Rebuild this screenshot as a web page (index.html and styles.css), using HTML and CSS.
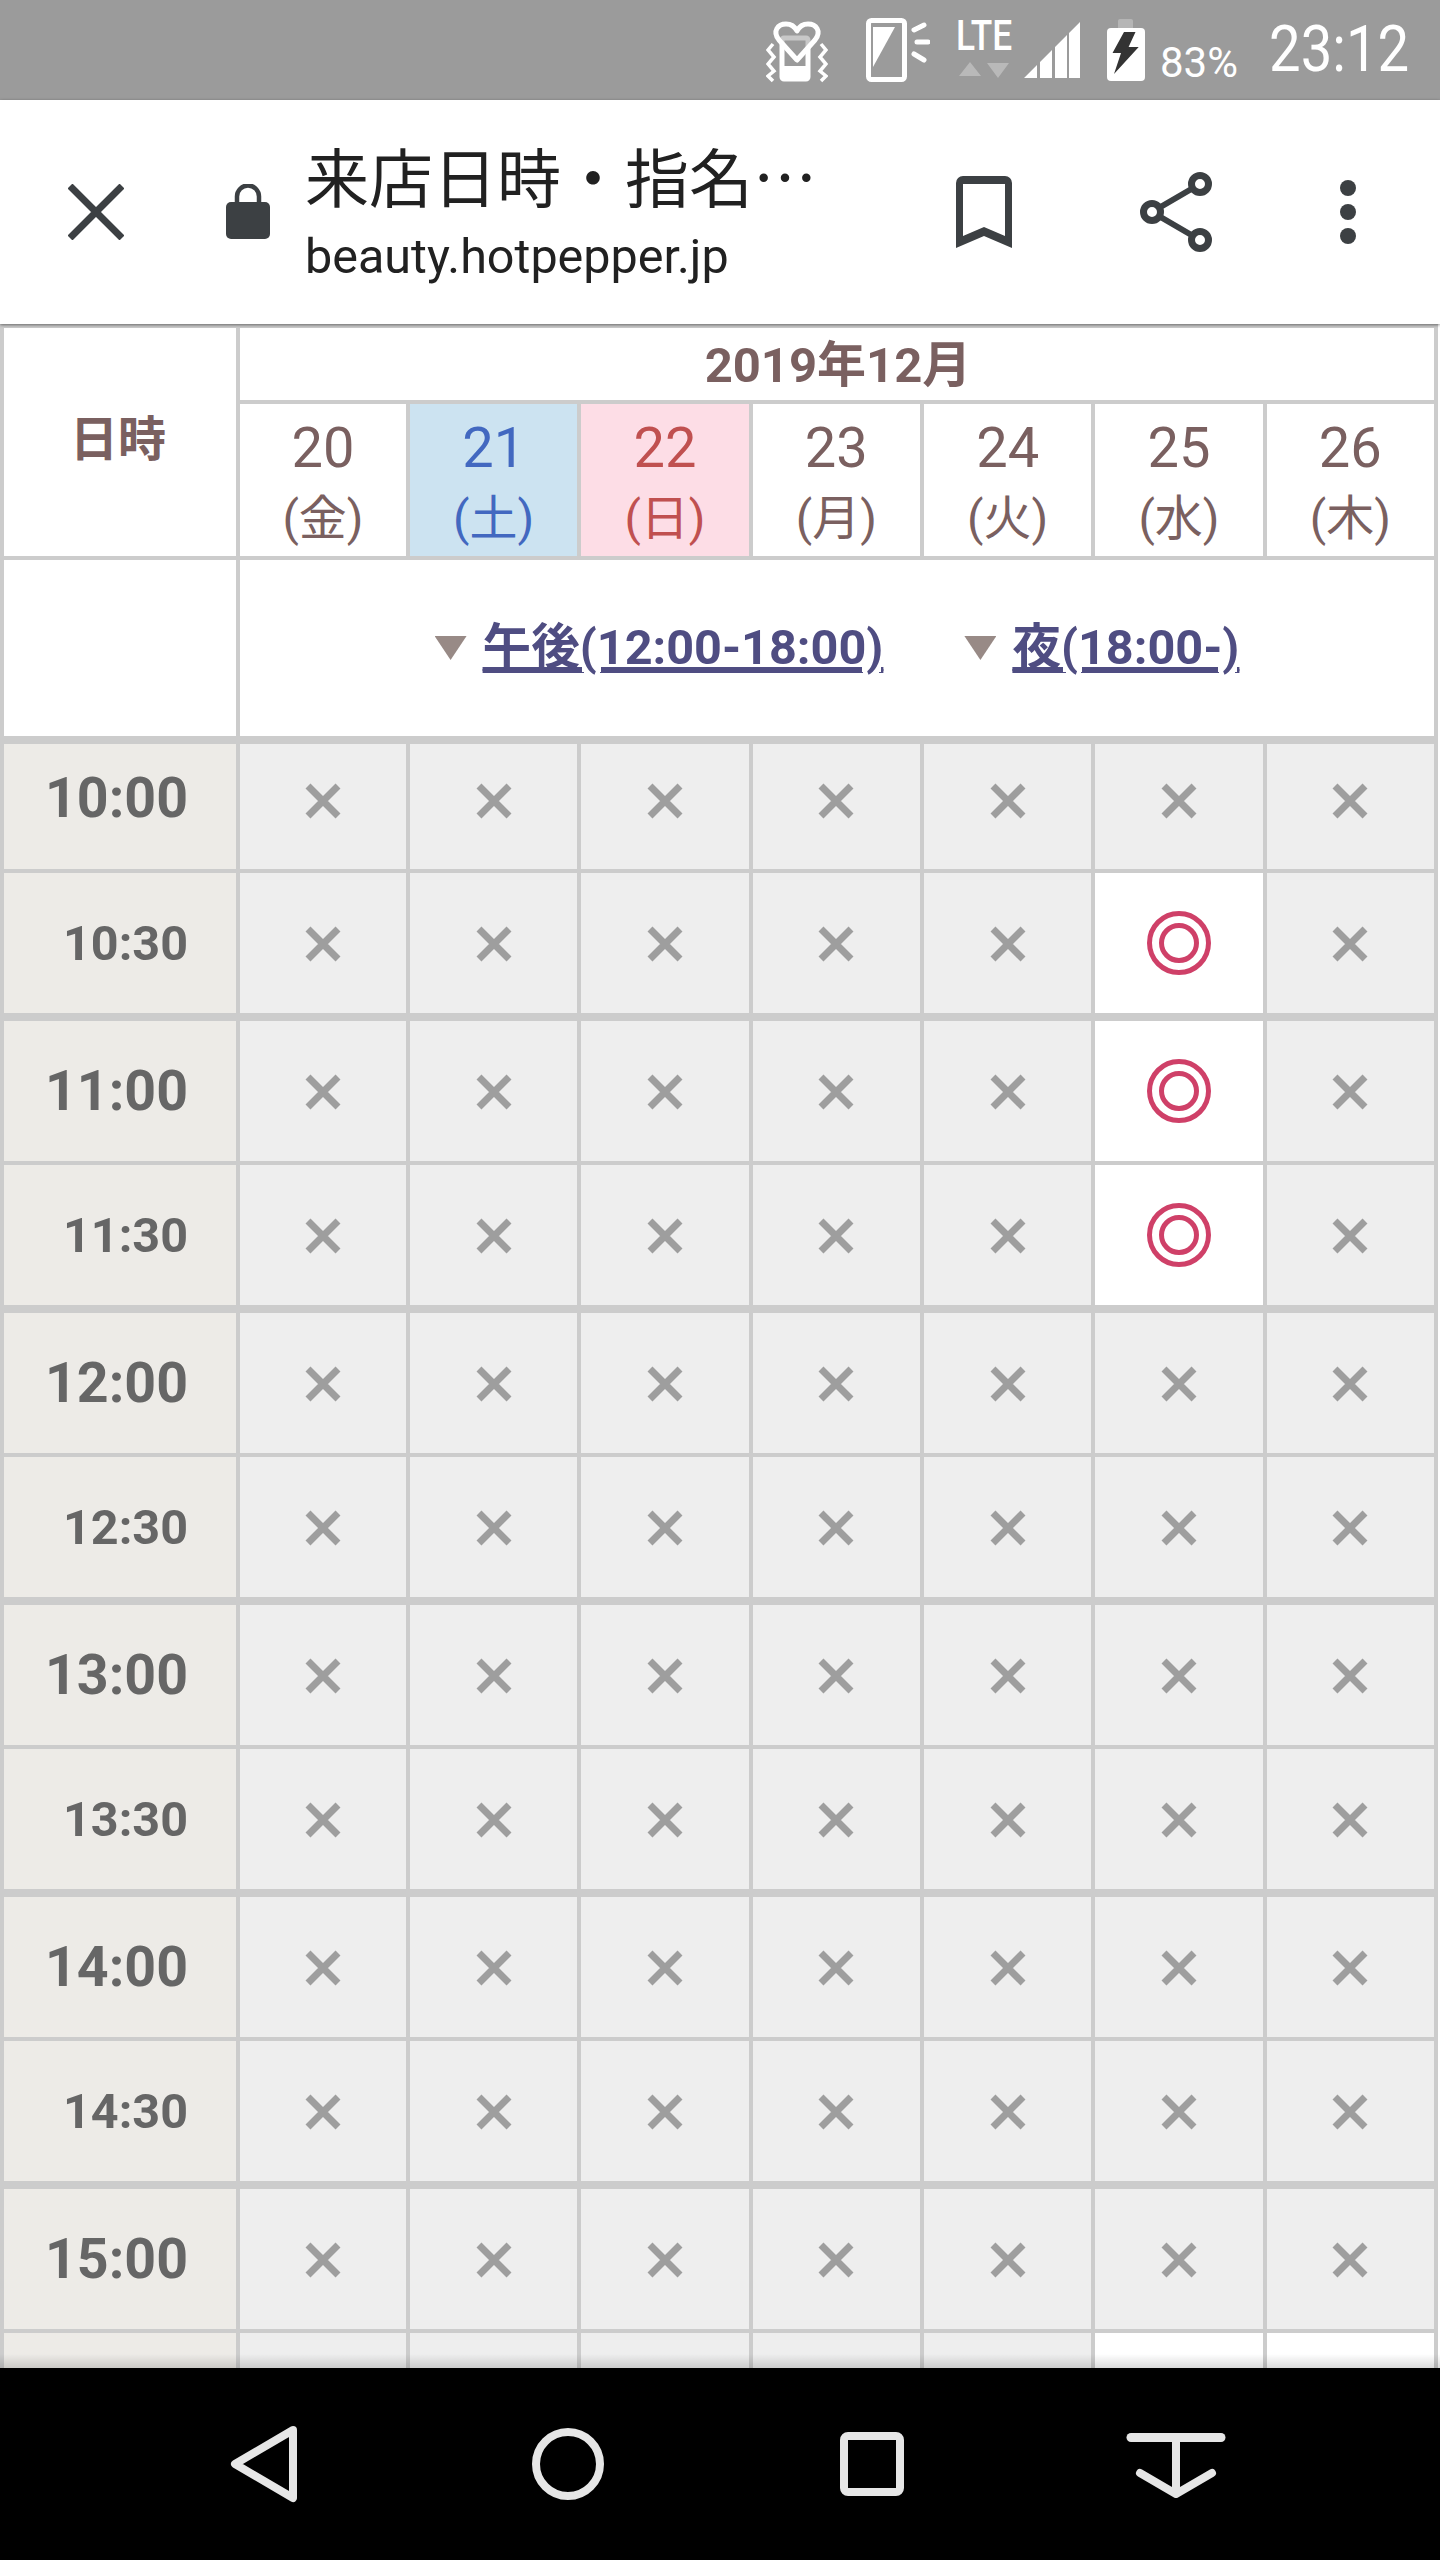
FILE: index.html
```html
<!DOCTYPE html>
<html lang="ja">
<head>
    <meta charset="UTF-8">
    <meta name="viewport" content="width=device-width, initial-scale=1.0">
    <title>来店日時・指名</title>
    <link rel="stylesheet" href="styles.css">
</head>
<body>
    <svg class="defs" width="0" height="0">
        <symbol id="mark-x" viewBox="0 0 36 36">
            <path d="M3 3L33 33M33 3L3 33" stroke="#9e9e9e" stroke-width="7" fill="none"/>
        </symbol>
        <symbol id="mark-o" viewBox="0 0 64 64">
            <circle cx="32" cy="32" r="29.5" stroke="#cf4068" stroke-width="5" fill="none"/>
            <circle cx="32" cy="32" r="17.5" stroke="#cf4068" stroke-width="5" fill="none"/>
        </symbol>
    </svg>

    <!-- Status bar -->
    <div class="status-bar">
        <svg class="heart" width="62" height="100" viewBox="766 0 62 100" fill="none" stroke="#fff">
            <rect x="782" y="38" width="26" height="41" rx="2" stroke-width="5"/>
            <rect x="782" y="66" width="26" height="14" fill="#fff" stroke="none"/>
            <path d="M797 60L779 40C772 31 778 24 786 24C791 24 795 27 797 31C799 27 803 24 808 24C816 24 822 31 815 40Z" stroke-width="5" stroke-linejoin="round" fill="#9b9b9b" fill-opacity=".55"/>
            <path d="M773 44L768 50L774 57L768 64L774 71L768 76L773 81M821 44L826 50L820 57L826 64L820 71L826 76L821 81" stroke-width="3.5"/>
        </svg>
        <svg class="rotate" width="64" height="100" viewBox="866 0 64 100" fill="none" stroke="#fff">
            <rect x="868.5" y="20.5" width="36" height="59" rx="3" stroke-width="5"/>
            <path d="M873 27H895L873 67Z" fill="#fff" stroke="none"/>
            <path d="M914 30L924 25M917 42H928M914 54L924 60" stroke-width="5" stroke-linecap="round"/>
        </svg>
        <div class="lte">
            <span class="lte-text">LTE</span>
            <svg width="56" height="20" viewBox="956 60 56 20">
                <path d="M959 76L970 62L981 76Z M987 63H1009L998 78Z" fill="#b9b9b9"/>
            </svg>
        </div>
        <svg class="signal" width="56" height="100" viewBox="1024 0 56 100" fill="#fff">
            <path d="M1024 78L1037 65V78Z M1040 62L1052 50V78H1040Z M1055 47L1067 35V78H1055Z M1069 33L1080 22V78H1069Z"/>
        </svg>
        <svg class="battery" width="38" height="100" viewBox="1107 0 38 100">
            <path d="M1118 28V21a2 2 0 0 1 2-2H1131a2 2 0 0 1 2 2V28Z" fill="#b5b5b5"/>
            <rect x="1107" y="28" width="38" height="53" rx="4" fill="#fff"/>
            <path d="M1124 32H1135.5L1128.6 47H1138.7L1114 74L1121 53H1112.5Z" fill="#333"/>
        </svg>
        <span class="battery-pct">83%</span>
        <span class="clock">23:12</span>
    </div>

    <!-- Browser toolbar -->
    <div class="toolbar">
        <svg class="close" width="56" height="56" viewBox="68 184 56 56" fill="none" stroke="#3c4043">
            <path d="M70 186L122 238M122 186L70 238" stroke-width="7"/>
        </svg>
        <svg class="lock" width="44" height="56" viewBox="226 183 44 56" fill="#3c4043">
            <path d="M237 203V195.5a11 11 0 0 1 22 0V203" fill="none" stroke="#3c4043" stroke-width="4.5"/>
            <rect x="226" y="201" width="44" height="37" rx="5"/>
        </svg>
        <div class="page-title">
            <div class="page-name">来店日時・指名…</div>
            <div class="page-url">beauty.hotpepper.jp</div>
        </div>
        <svg class="bookmark" width="56" height="72" viewBox="956 176 56 72" fill="#3c4043">
            <path fill-rule="evenodd" d="M956 248V183a7 7 0 0 1 7-7H1005a7 7 0 0 1 7 7V248L984 236ZM963 184V236L984 227L1005 236V184Z"/>
        </svg>
        <svg class="share" width="72" height="80" viewBox="1140 172 72 80" fill="#fff" stroke="#3c4043">
            <path d="M1200 184L1152 212L1200 240" fill="none" stroke-width="6"/>
            <circle cx="1200" cy="184" r="8.5" stroke-width="7"/>
            <circle cx="1152" cy="212" r="8.5" stroke-width="7"/>
            <circle cx="1200" cy="240" r="8.5" stroke-width="7"/>
        </svg>
        <svg class="kebab" width="16" height="64" viewBox="1340 180 16 64" fill="#3c4043">
            <circle cx="1348" cy="188" r="8"/>
            <circle cx="1348" cy="212" r="8"/>
            <circle cx="1348" cy="236" r="8"/>
        </svg>
    </div>

    <!-- Reservation calendar -->
    <div class="main">
        <div class="calendar">
            <div class="head">
                <div class="head-label">日時</div>
                <div class="head-month">2019年12月</div>
                <div class="day"><span class="day-num">20</span><span class="day-week">(金)</span></div>
                <div class="day sat"><span class="day-num">21</span><span class="day-week">(土)</span></div>
                <div class="day sun"><span class="day-num">22</span><span class="day-week">(日)</span></div>
                <div class="day"><span class="day-num">23</span><span class="day-week">(月)</span></div>
                <div class="day"><span class="day-num">24</span><span class="day-week">(火)</span></div>
                <div class="day"><span class="day-num">25</span><span class="day-week">(水)</span></div>
                <div class="day"><span class="day-num">26</span><span class="day-week">(木)</span></div>
                <div class="head-blank"></div>
                <div class="jump-links">
                    <a class="jump" href="#"><i class="jump-arrow"></i><span class="jump-text">午後(12:00-18:00)</span></a>
                    <a class="jump" href="#"><i class="jump-arrow"></i><span class="jump-text">夜(18:00-)</span></a>
                </div>
            </div>
            <div id="slots"></div>
        </div>
    </div>

    <!-- Android nav bar -->
    <div class="nav-bar">
        <svg class="nav-back" width="68" height="192" viewBox="230 2368 68 192" fill="none" stroke="#e6e6e6">
            <path d="M293 2430L235 2464L293 2498Z" stroke-width="8" stroke-linejoin="round"/>
        </svg>
        <svg class="nav-home" width="72" height="192" viewBox="532 2368 72 192" fill="none" stroke="#e6e6e6">
            <circle cx="568" cy="2464" r="32" stroke-width="8"/>
        </svg>
        <svg class="nav-recent" width="64" height="192" viewBox="840 2368 64 192" fill="none" stroke="#e6e6e6">
            <rect x="844" y="2436" width="56" height="56" rx="4" stroke-width="8"/>
        </svg>
        <svg class="nav-hide" width="100" height="192" viewBox="1126 2368 100 192" fill="none" stroke="#e6e6e6" stroke-linecap="round" stroke-linejoin="round">
            <path d="M1131 2437.5H1221" stroke-width="9"/>
            <path d="M1176 2438V2494" stroke-width="8" stroke-linecap="butt"/>
            <path d="M1140 2473L1176 2494L1212 2473" stroke-width="8"/>
        </svg>
    </div>

    <script>
        // open = day columns with a free slot, everything else is closed
        const slots = [
            { time: "10:00", hour: true },
            { time: "10:30", open: [5] },
            { time: "11:00", hour: true, open: [5] },
            { time: "11:30", open: [5] },
            { time: "12:00", hour: true },
            { time: "12:30" },
            { time: "13:00", hour: true },
            { time: "13:30" },
            { time: "14:00", hour: true },
            { time: "14:30" },
            { time: "15:00", hour: true },
            { time: "", open: [5, 6] } // only the top of this row is on screen
        ];

        function createRow(slot, index) {
            const row = document.createElement('div');
            row.className = 'row' + (slot.hour ? ' row-hour' : '') + (index === 0 ? ' row-first' : '');

            let cells = `<div class="time">${slot.time}</div>`;
            for (let day = 0; day < 7; day++) {
                const isOpen = slot.open && slot.open.includes(day);
                const size = isOpen ? 64 : 36;
                cells += `<div class="cell ${isOpen ? 'open' : ''}"><svg width="${size}" height="${size}"><use href="#mark-${isOpen ? 'o' : 'x'}"/></svg></div>`;
            }
            row.innerHTML = cells;
            return row;
        }

        const container = document.getElementById('slots');
        slots.forEach((slot, index) => container.appendChild(createRow(slot, index)));
    </script>
</body>
</html>
```

FILE: styles.css
```css
* {
    box-sizing: border-box;
}

html, body {
    margin: 0;
    height: 2560px;
    background: #fff;
    overflow: hidden;
}

body {
    display: flex;
    flex-direction: column;
    font-family: Roboto, "Noto Sans CJK JP", sans-serif;
}

svg {
    display: block;
    flex: none;
}

.defs {
    position: absolute;
}

/* Status bar */
.status-bar {
    height: 100px;
    flex: none;
    display: flex;
    padding-left: 766px;
    background: #9b9b9b;
    color: #fff;
}

.rotate { margin-left: 38px; }
.signal { margin-left: 12px; }
.battery { margin-left: 27px; }

.lte {
    width: 56px;
    margin-left: 26px;
    padding-top: 12px;
}

.lte-text {
    display: block;
    width: 56px;
    font-size: 42px;
    font-weight: 500;
    line-height: 48px;
    white-space: nowrap;
    transform: scaleX(0.84);
    transform-origin: left center;
}

.battery-pct {
    margin-left: 15px;
    margin-top: 38px;
    font-size: 42px;
    line-height: 49px;
}

.clock {
    width: 137px;
    margin-left: 31px;
    margin-top: 12px;
    font-size: 64px;
    line-height: 75px;
    white-space: nowrap;
    transform: scaleX(0.88);
    transform-origin: left center;
}

/* Toolbar */
.toolbar {
    position: relative;
    z-index: 1;
    height: 224px;
    flex: none;
    display: flex;
    align-items: center;
    padding-left: 68px;
    background: #fff;
    box-shadow: 0 1px 3px rgba(0, 0, 0, 0.5);
}

.lock { margin-left: 102px; }

.page-title {
    width: 520px;
    margin-left: 35px;
    padding-bottom: 5px;
    color: #212121;
}

.page-name {
    font-family: "Noto Sans CJK JP", sans-serif;
    font-size: 64px;
    line-height: 80px;
    white-space: nowrap;
}

.page-url {
    margin-top: 15px;
    font-size: 48.5px;
    line-height: 56px;
    white-space: nowrap;
}

.bookmark { margin-left: 131px; }
.share { margin-left: 128px; }
.kebab { margin-left: 128px; }

/* Calendar */
.main {
    position: relative;
    flex: 1;
    overflow: hidden;
}

.main::after {
    content: "";
    position: absolute;
    left: 0;
    right: 0;
    bottom: 0;
    height: 14px;
    background: linear-gradient(rgba(0, 0, 0, 0), rgba(0, 0, 0, 0.14));
}

.calendar {
    width: 1438px;
    padding: 4px 4px 0;
    background: #ccc;
}

.head {
    display: grid;
    grid-template-columns: 232px 166px repeat(6, 1fr);
    grid-template-rows: 72px 152px 176px;
    gap: 4px;
    color: #7a6060;
}

.head-label {
    grid-row: span 2;
    padding: 0 4px 14px 0;
    display: flex;
    align-items: center;
    justify-content: center;
    background: #fff;
    font-size: 48px;
    font-weight: 700;
}

.head-month {
    grid-column: span 7;
    padding: 0 0 8px 2px;
    display: flex;
    align-items: center;
    justify-content: center;
    background: #fff;
    font-size: 49px;
    font-weight: 700;
}

.day {
    display: flex;
    flex-direction: column;
    align-items: center;
    background: #fff;
}

.day.sat {
    background: #cce3f1;
    color: #4268c0;
}

.day.sun {
    background: #fddde6;
    color: #c05050;
}

.day-num {
    margin-top: 11px;
    font-size: 56px;
    line-height: 66px;
}

.day-week {
    margin-top: 5px;
    font-size: 48px;
    line-height: 66px;
}

.head-blank {
    background: #fff;
}

.jump-links {
    grid-column: span 7;
    display: flex;
    align-items: center;
    justify-content: center;
    gap: 81px;
    background: #fff;
}

.jump {
    display: flex;
    align-items: center;
    gap: 16px;
    color: #4f4d82;
    font-size: 48.6px;
    font-weight: 700;
}

.jump-arrow {
    width: 32px;
    height: 24px;
    background: #988a86;
    clip-path: polygon(0 0, 100% 0, 50% 100%);
}

.jump-text {
    padding-bottom: 10px;
    text-decoration: underline;
    text-decoration-thickness: 4px;
    text-underline-offset: 5px;
}

.row {
    display: grid;
    grid-template-columns: 232px 166px repeat(6, 1fr);
    grid-template-rows: 140px;
    gap: 4px;
    margin-top: 4px;
}

.row-hour {
    margin-top: 8px;
}

.row-first {
    grid-template-rows: 125px;
}

.time {
    display: flex;
    align-items: center;
    justify-content: flex-end;
    padding-right: 48px;
    background: #edebe7;
    color: #666;
    font-size: 48.5px;
    font-weight: 700;
}

.row-hour .time {
    font-size: 55.5px;
}

.row-first .time {
    padding-bottom: 16px;
}

.cell {
    display: flex;
    align-items: center;
    justify-content: center;
    padding-top: 2px;
    background: #eee;
}

.row-first .cell {
    padding-bottom: 14px;
}

.cell.open {
    padding-top: 0;
    background: #fff;
}

/* Nav bar */
.nav-bar {
    height: 192px;
    flex: none;
    display: flex;
    padding-left: 230px;
    background: #000;
}

.nav-home { margin-left: 234px; }
.nav-recent { margin-left: 236px; }
.nav-hide { margin-left: 222px; }
```
